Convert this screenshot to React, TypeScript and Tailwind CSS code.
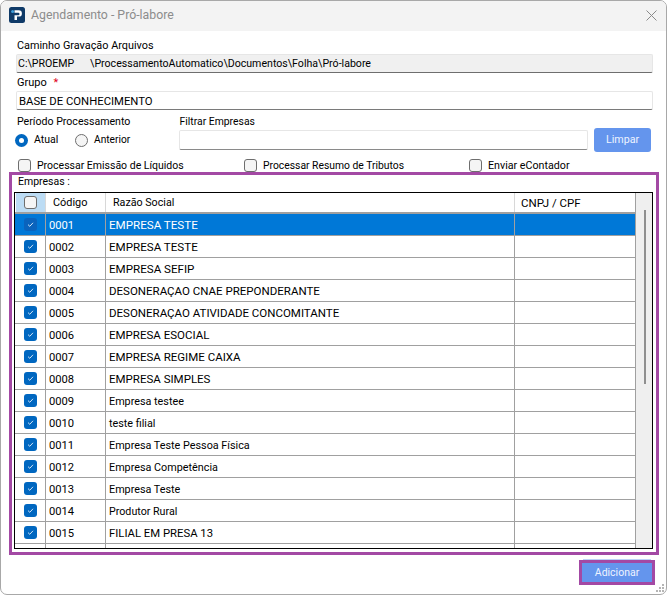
import React from "react";

const rows = [
  ["0001", "EMPRESA TESTE", "text-[11.6px]"],
  ["0002", "EMPRESA TESTE", "text-[11.6px]"],
  ["0003", "EMPRESA SEFIP", "text-[11.6px]"],
  ["0004", "DESONERAÇAO CNAE PREPONDERANTE", "text-[11.5px]"],
  ["0005", "DESONERAÇAO ATIVIDADE CONCOMITANTE", "text-[11.5px]"],
  ["0006", "EMPRESA ESOCIAL", "text-[11.5px]"],
  ["0007", "EMPRESA REGIME CAIXA", "text-[11.5px]"],
  ["0008", "EMPRESA SIMPLES", "text-[11.5px]"],
  ["0009", "Empresa testee", "text-[10.8px] pt-[2px]"],
  ["0010", "teste filial", "text-[10.8px] pt-[2px]"],
  ["0011", "Empresa Teste Pessoa Física", "text-[10.8px] pt-[2px]"],
  ["0012", "Empresa Competência", "text-[10.8px] pt-[2px]"],
  ["0013", "Empresa Teste", "text-[10.8px] pt-[2px]"],
  ["0014", "Produtor Rural", "text-[10.7px] pt-[2px]"],
  ["0015", "FILIAL EM PRESA 13", "text-[11.3px] pt-[2px]"],
];

function Box({ label, className }: { label: string; className: string }) {
  return (
    <label className={`flex items-center gap-[6px] ${className}`}>
      <span className="block w-[13px] h-[13px] rounded-[3px] border border-[#6e6e6e] bg-[#f5f5f5]" />
      <span className="pt-[2px]">{label}</span>
    </label>
  );
}

function Checked({ dim }: { dim?: boolean }) {
  return (
    <span className={`flex items-center justify-center w-[13px] h-[13px] rounded-[3px] ${dim ? "bg-[#0a63bd]" : "bg-[#0067c0]"}`}>
      <svg width="9" height="9" viewBox="0 0 9 9" fill="none">
        <path d="M2 4.6 L3.8 6.3 L7 2.8" stroke="#cfe4f7" strokeWidth="1" />
      </svg>
    </span>
  );
}

export default function App() {
  return (
    <div className="w-[668px] h-[595px] bg-white overflow-hidden text-black text-[10.7px] leading-[14px] font-['Roboto',sans-serif]">
      <div className="relative w-[667px] h-[595px] border border-[#a8a8a8] rounded-[7px] overflow-hidden bg-white">
        <div className="flex items-center h-[30px] bg-[#f3f3f3] pl-[8px] pr-[9px] pb-[2px]">
          <svg width="16" height="16" viewBox="0 0 16 16">
            <rect width="16" height="16" rx="2.5" fill="#0f3a68" />
            <path d="M5.5 3.2h4.2a3.1 3.1 0 0 1 0 6.4H8v3.4H5.5V8.2h3.8a1 1 0 0 0 0-2.4H5.5z" fill="#fff" />
            <circle cx="3.6" cy="4.6" r="1.5" fill="#3f9fdc" />
          </svg>
          <span className="ml-[6px] text-[12.3px] text-[#8c8c8c]">Agendamento - Pró-labore</span>
          <svg className="ml-auto" width="11" height="11" viewBox="0 0 11 11" fill="none">
            <path d="M0.5 0.5 L10.5 10.5 M10.5 0.5 L0.5 10.5" stroke="#8a8a8a" strokeWidth="1" />
          </svg>
        </div>

        <div className="px-[15px] pt-[7px]">
          <div className="h-[14px] pl-[1px] pt-[1px] text-[10.85px]">Caminho Gravação Arquivos</div>
          <div className="mt-[2px] h-[19px] w-[637px] bg-[#f0f0f0] border-t border-x border-[#e6e6e6] border-b-[#6e6e6e] border-b flex items-center pl-[1px] whitespace-pre rounded-[2px] text-[10.6px]">
            C:\PROEMP      \ProcessamentoAutomatico\Documentos\Folha\Pró-labore
          </div>
          <div className="mt-[2px] h-[14px] pl-[1px] pt-[1px] text-[11px]">
            Grupo <span className="text-[#e00020] ml-[4px]">*</span>
          </div>
          <div className="mt-[2px] h-[19px] w-[637px] bg-white border-t border-x border-[#e6e6e6] border-b-[#7a7a7a] border-b flex items-center pl-[2px] pt-[2px] rounded-[2px] text-[11.3px]">
            BASE DE CONHECIMENTO
          </div>

          <div className="flex mt-[4px] h-[38px]">
            <div className="w-[164px] pl-[1px]">
              <div className="h-[14px] pt-[1px] text-[10.6px]">Período Processamento</div>
              <div className="flex items-center mt-[5px] -ml-[2px]">
                <span className="w-[13px] h-[13px] rounded-full bg-[#0067c0] flex items-center justify-center">
                  <span className="w-[5px] h-[5px] rounded-full bg-white" />
                </span>
                <span className="ml-[6px] w-[41px] text-[10.5px]">Atual</span>
                <span className="w-[13px] h-[13px] rounded-full border border-[#6e6e6e] bg-[#f5f5f5]" />
                <span className="ml-[6px] text-[10.2px]">Anterior</span>
              </div>
            </div>
            <div className="w-[416px]">
              <div className="h-[14px] pt-[1px] text-[10.4px]">Filtrar Empresas</div>
              <div className="mt-[2px] h-[20px] w-[409px] bg-white border-t border-x border-[#e6e6e6] border-b-[#8a8a8a] border-b rounded-[2px]" />
            </div>
            <button className="mt-[14px] w-[57px] h-[24px] rounded-[3px] bg-[#6495ed] text-[#eef3ff] text-[10.7px]">Limpar</button>
          </div>

          <div className="flex mt-[6px] h-[14px] text-[10.5px]">
            <Box label="Processar Emissão de Líquidos" className="ml-[2px] w-[226px]" />
            <Box label="Processar Resumo de Tributos" className="w-[225px] text-[10.35px]" />
            <Box label="Enviar eContador" className="text-[10.7px]" />
          </div>
        </div>

        <div className="ml-[8px] w-[650px] h-[383px] border-[3px] border-[#a349a4] px-[2px]">
          <div className="h-[17px] pl-[4px] text-[10.5px]">Empresas :</div>
          <div className="w-[639px] h-[357px] border border-black overflow-hidden flex bg-white">
            <div className="w-[620px] shrink-0">
              <div className="flex h-[21px] border-b-2 border-[#a0a0a0]">
                <div className="w-[31px] pl-[1px] border-r border-[#d8d8d8]">
                  <div className="h-full bg-[#bcdcf4] flex items-center justify-center">
                    <span className="block w-[13px] h-[13px] rounded-[3px] border border-[#6e6e6e] bg-[#f5f5f5]" />
                  </div>
                </div>
                <div className="w-[60px] pl-[7px] flex items-center border-r border-[#d8d8d8] text-[10.9px]">Código</div>
                <div className="w-[409px] pl-[7px] flex items-center border-r border-[#d8d8d8]">Razão Social</div>
                <div className="w-[120px] pl-[6px] flex items-center text-[11.5px]">CNPJ / CPF</div>
              </div>
              {rows.map(([c, n, size], i) => (
                <div key={c} className={`flex h-[22px] border-b border-[#a0a0a0] ${i === 0 ? "bg-[#0078d7] text-white" : ""}`}>
                  <div className="w-[31px] flex items-center justify-center border-r border-[#a0a0a0]">
                    <Checked dim={i === 0} />
                  </div>
                  <div className="w-[60px] pl-[3px] pt-[2px] flex items-center border-r border-[#a0a0a0] text-[11.2px]">{c}</div>
                  <div className={`w-[409px] pl-[3px] flex items-center border-r border-[#a0a0a0] ${size}`}>{n}</div>
                  <div className="w-[120px]" />
                </div>
              ))}
              <div className="flex h-[10px]">
                <div className="w-[31px] border-r border-[#a0a0a0]" />
                <div className="w-[60px] border-r border-[#a0a0a0]" />
                <div className="w-[409px] border-r border-[#a0a0a0]" />
              </div>
            </div>
            <div className="flex-1 bg-[#efefef] border-l border-[#a0a0a0] pl-[8px] pt-[17px]">
              <div className="w-[2px] h-[174px] bg-[#8f8f8f]" />
            </div>
          </div>
        </div>

        <div className="flex justify-end mt-[5px] pr-[11px]">
          <button className="w-[76px] h-[25px] border-[3px] border-[#a349a4] bg-[#6495ed] text-[#eef3ff] text-[10.5px] shadow-[0_-5px_0_-4px_#bcd2f7]">Adicionar</button>
        </div>

        <svg className="absolute right-[1px] bottom-[1px]" width="9" height="9" viewBox="0 0 9 9" fill="#b5b5b5">
          <rect x="6" y="0" width="2" height="2" />
          <rect x="3" y="3" width="2" height="2" />
          <rect x="6" y="3" width="2" height="2" />
          <rect x="0" y="6" width="2" height="2" />
          <rect x="3" y="6" width="2" height="2" />
          <rect x="6" y="6" width="2" height="2" />
        </svg>
      </div>
    </div>
  );
}
